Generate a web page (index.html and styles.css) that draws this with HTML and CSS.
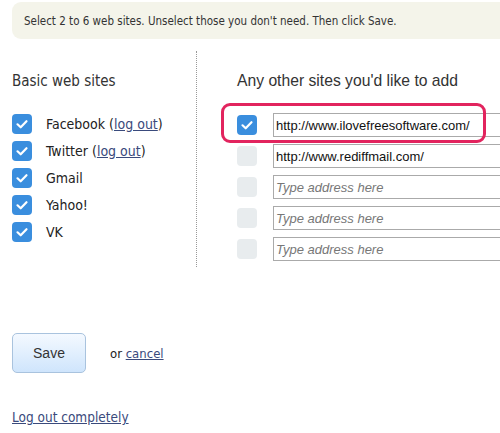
FILE: index.html
```html
<!DOCTYPE html>
<html>
<head>
<meta charset="utf-8">
<link rel="stylesheet" href="styles.css">
</head>
<body>
<div class="banner">Select 2 to 6 web sites. Unselect those you don't need. Then click Save.</div>
<div class="main">
  <div class="left">
    <h2 class="lhead">Basic web sites</h2>
    <ul class="basic">
      <li><span class="cb on"><svg viewBox="0 0 20 20" width="20" height="20"><path d="M5.5 10.3 L8.7 13.3 L14.5 7.2" fill="none" stroke="#fff" stroke-width="2.2" stroke-linecap="round" stroke-linejoin="round"/></svg></span>Facebook (<a href="#">log out</a>)</li>
      <li><span class="cb on"><svg viewBox="0 0 20 20" width="20" height="20"><path d="M5.5 10.3 L8.7 13.3 L14.5 7.2" fill="none" stroke="#fff" stroke-width="2.2" stroke-linecap="round" stroke-linejoin="round"/></svg></span>Twitter (<a href="#">log out</a>)</li>
      <li><span class="cb on"><svg viewBox="0 0 20 20" width="20" height="20"><path d="M5.5 10.3 L8.7 13.3 L14.5 7.2" fill="none" stroke="#fff" stroke-width="2.2" stroke-linecap="round" stroke-linejoin="round"/></svg></span>Gmail</li>
      <li><span class="cb on"><svg viewBox="0 0 20 20" width="20" height="20"><path d="M5.5 10.3 L8.7 13.3 L14.5 7.2" fill="none" stroke="#fff" stroke-width="2.2" stroke-linecap="round" stroke-linejoin="round"/></svg></span>Yahoo!</li>
      <li><span class="cb on"><svg viewBox="0 0 20 20" width="20" height="20"><path d="M5.5 10.3 L8.7 13.3 L14.5 7.2" fill="none" stroke="#fff" stroke-width="2.2" stroke-linecap="round" stroke-linejoin="round"/></svg></span>VK</li>
    </ul>
  </div>
  <div class="right">
    <h2 class="rhead">Any other sites you'd like to add</h2>
    <div class="others">
      <div class="highlight"></div>
      <div class="row"><span class="cb on"><svg viewBox="0 0 20 20" width="20" height="20"><path d="M5.5 10.3 L8.7 13.3 L14.5 7.2" fill="none" stroke="#fff" stroke-width="2.2" stroke-linecap="round" stroke-linejoin="round"/></svg></span><input class="addr" type="text" value="http://www.ilovefreesoftware.com/"></div>
      <div class="row"><span class="cb"></span><input class="addr" type="text" value="http://www.rediffmail.com/"></div>
      <div class="row"><span class="cb"></span><input class="addr" type="text" placeholder="Type address here"></div>
      <div class="row"><span class="cb"></span><input class="addr" type="text" placeholder="Type address here"></div>
      <div class="row"><span class="cb"></span><input class="addr" type="text" placeholder="Type address here"></div>
    </div>
  </div>
</div>
<div class="actions">
  <button class="save">Save</button>
  <span class="or">or <a href="#">cancel</a></span>
</div>
<div class="logout"><a href="#">Log out completely</a></div>
</body>
</html>
```
FILE: styles.css
```css
html, body {
  margin: 0;
  padding: 0;
  background: #fff;
  overflow: hidden;
  width: 500px;
  height: 433px;
}
body {
  font-family: "DejaVu Sans Condensed", "DejaVu Sans", sans-serif;
  color: #222;
}
a {
  color: #3a4a7c;
  text-decoration: underline;
}
.banner {
  margin: 2px 0 0 12px;
  height: 37px;
  line-height: 38px;
  padding-left: 12px;
  background: #f4f4ea;
  border-radius: 9px 0 0 9px;
  font-size: 11.5px;
  color: #333;
}
.main {
  display: flex;
  margin-top: 12px;
}
.left {
  flex: none;
  width: 197px;
  padding-left: 12px;
  border-right: 1px dotted #999;
  height: 216px;
  box-sizing: border-box;
}
.lhead {
  margin: 19px 0 0;
  font-weight: normal;
  font-size: 15px;
  line-height: 22px;
  color: #333;
}
.basic {
  list-style: none;
  margin: 22px 0 0;
  padding: 0;
}
.basic li {
  display: flex;
  align-items: center;
  height: 20px;
  margin-bottom: 7px;
  font-size: 14px;
  color: #222;
}
.cb {
  display: inline-block;
  flex: none;
  width: 20px;
  height: 20px;
  border-radius: 4px;
  background: #e8ecee;
}
.cb.on {
  background: #3a8ede;
}
.cb svg {
  display: block;
}
.basic .cb {
  margin-right: 14px;
}
.right {
  padding-left: 40px;
  flex: 1;
  min-width: 0;
  overflow: hidden;
}
.rhead {
  margin: 19px 0 0;
  font-family: "Liberation Sans", Arial, sans-serif;
  font-weight: normal;
  font-size: 15.7px;
  line-height: 22px;
  color: #333;
  white-space: nowrap;
}
.others {
  position: relative;
  margin-top: 21px;
  padding-top: 0;
}
.row {
  display: flex;
  align-items: center;
  height: 24px;
  margin-bottom: 7px;
}
.row .cb {
  margin-right: 16px;
}
.addr {
  box-sizing: border-box;
  flex: none;
  width: 260px;
  height: 24px;
  margin: 0;
  padding: 0 2px;
  border: 1px solid #aaa;
  font-family: "Liberation Sans", Arial, sans-serif;
  font-size: 13px;
  color: #111;
  outline: none;
}
.addr::placeholder {
  color: #777;
  font-style: italic;
}
.highlight {
  position: absolute;
  left: -16px;
  top: -10px;
  width: 259px;
  height: 34px;
  border: 3px solid #e2245e;
  border-radius: 9px;
  z-index: 2;
  pointer-events: none;
}
.actions {
  display: flex;
  align-items: center;
  margin: 65px 0 0 12px;
}
.save {
  width: 74px;
  height: 40px;
  border: 1px solid #a9c3de;
  border-radius: 5px;
  background: linear-gradient(#f4f9ff, #cfe5fc);
  font-family: "Liberation Sans", Arial, sans-serif;
  font-size: 14px;
  color: #333;
  padding: 0;
}
.or {
  margin-left: 24px;
  font-size: 13px;
  color: #222;
}
.logout {
  margin: 36px 0 0 12px;
  font-size: 13.5px;
}
```
